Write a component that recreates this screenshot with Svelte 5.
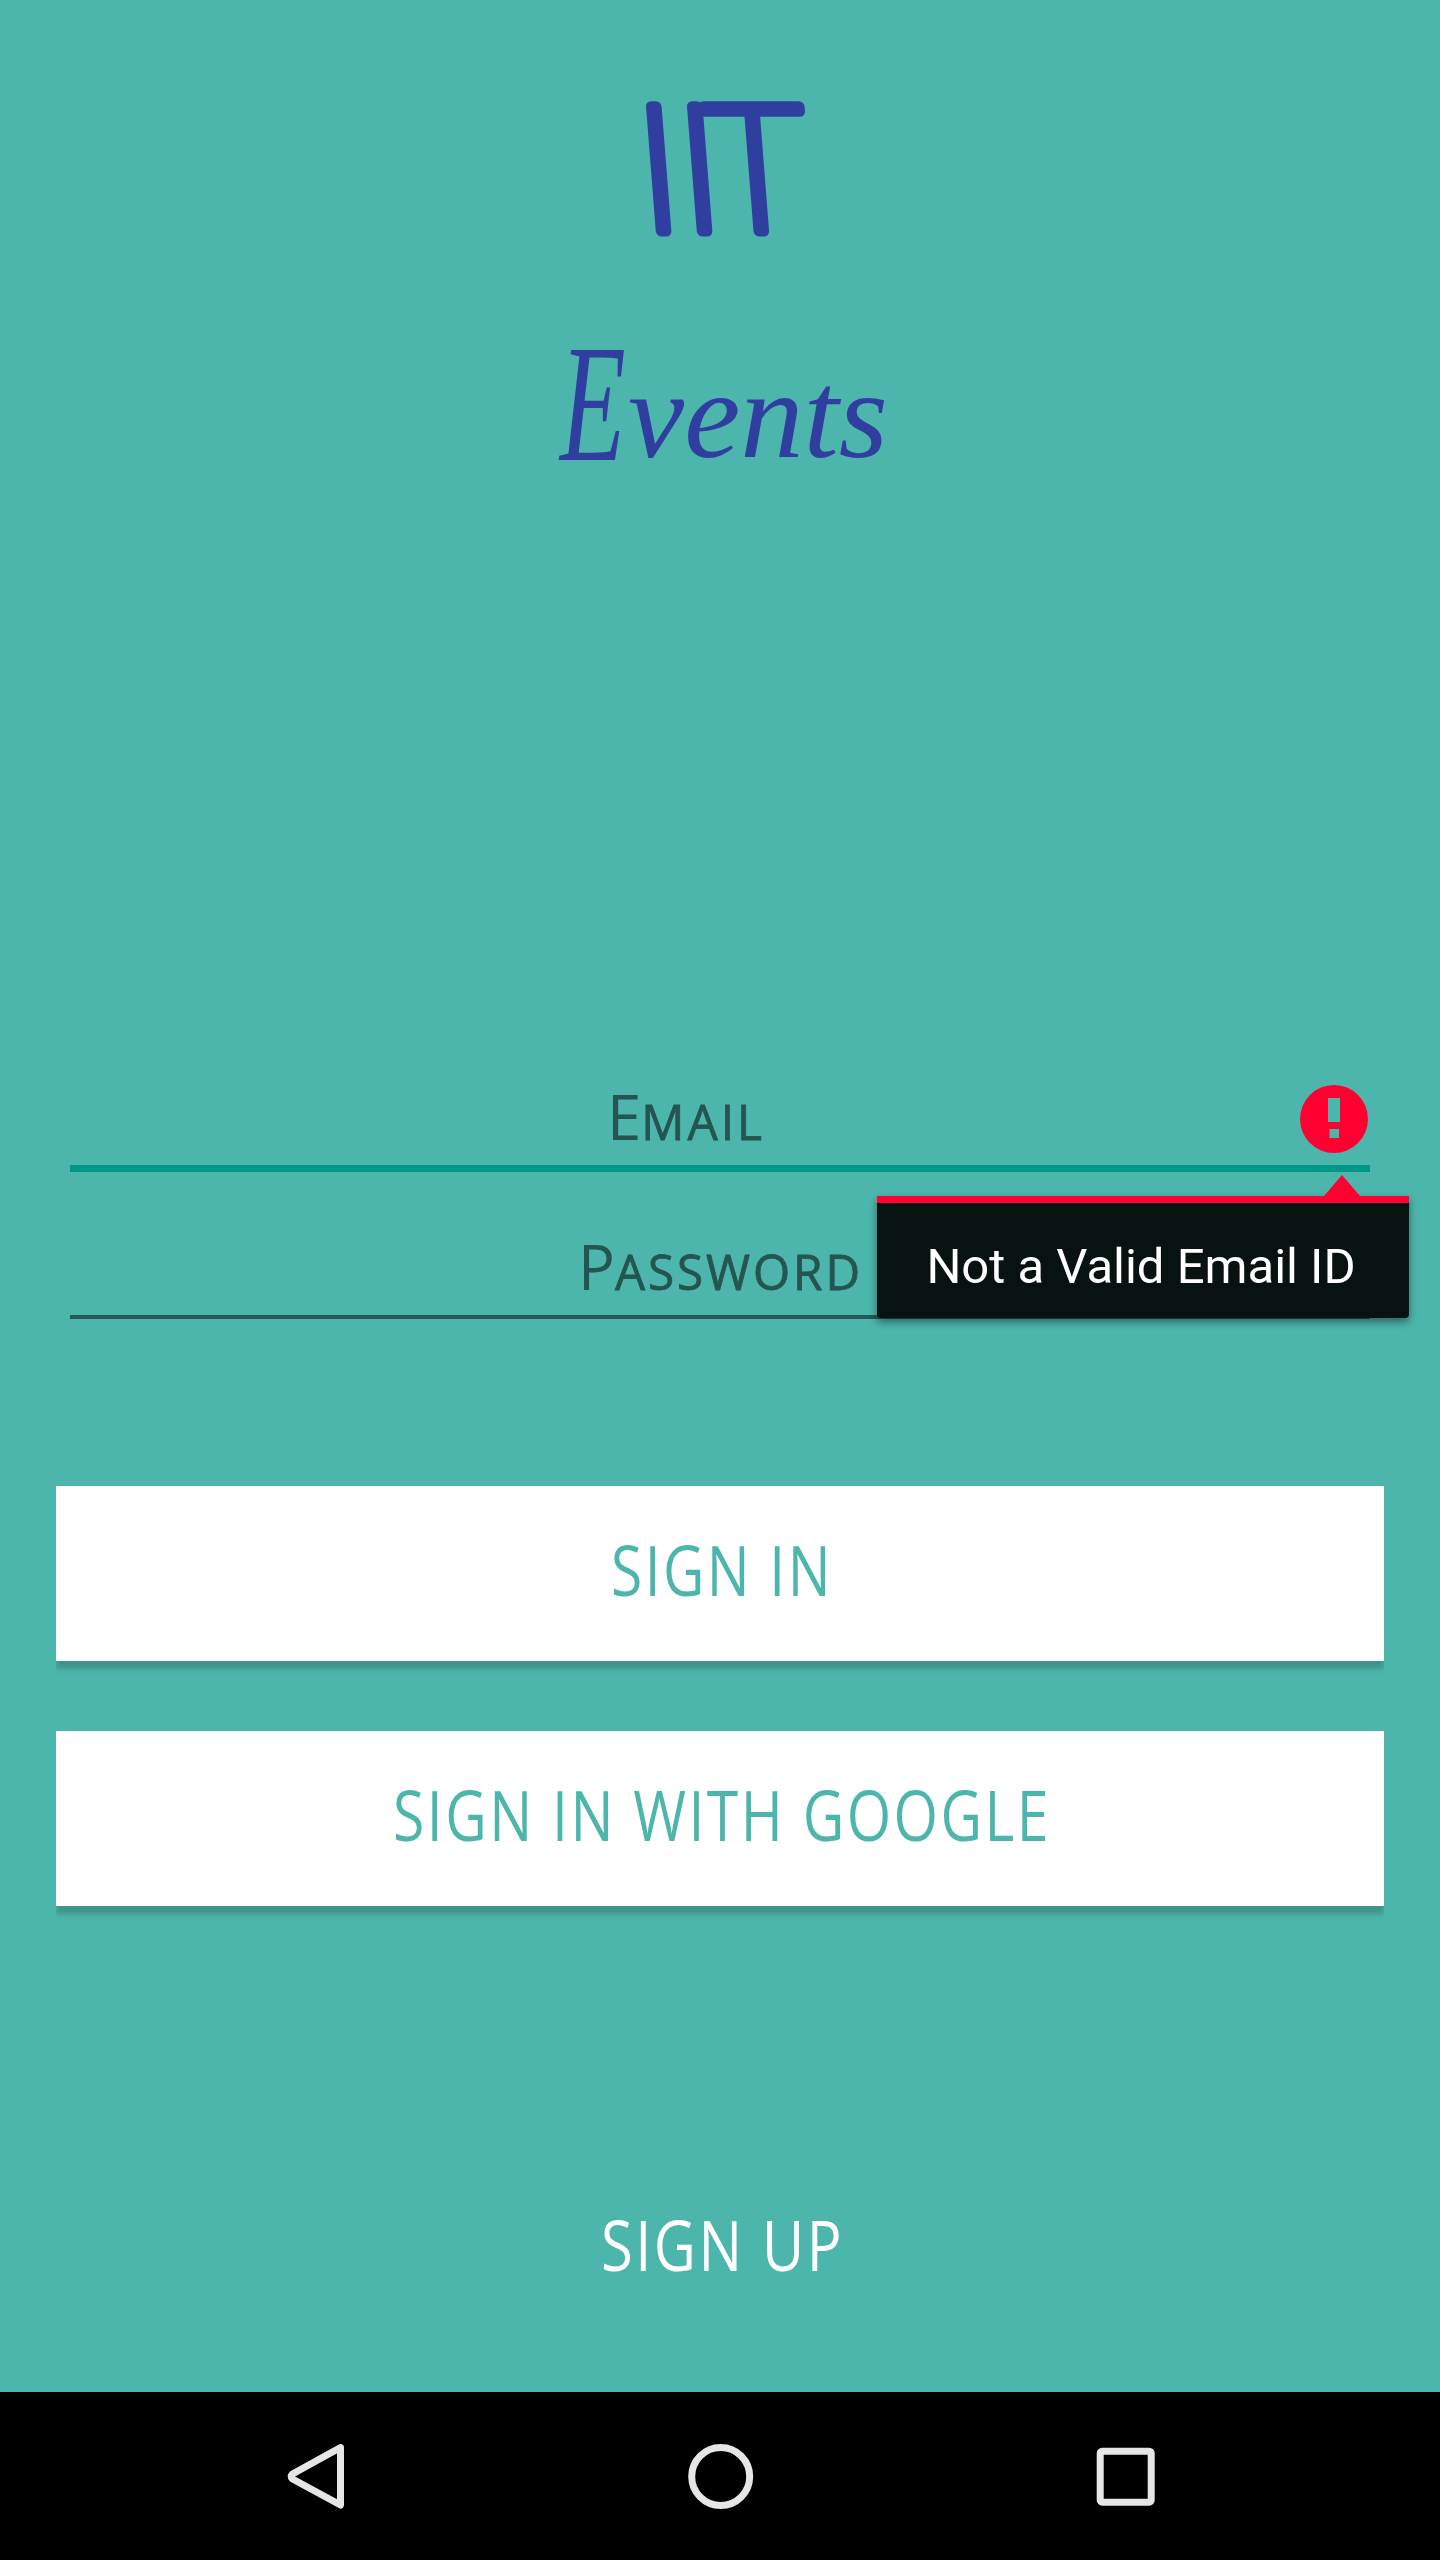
<script>
  const navIcons = ['back', 'home', 'recent'];
</script>

{#snippet label(text, width, size)}
  <svg class="label" {width} height="80" viewBox="0 0 {width} 80" role="img" aria-label={text}>
    <text x="2" y="65" font-size={size} textLength={width} lengthAdjust="spacingAndGlyphs">{text}</text>
  </svg>
{/snippet}

<div class="screen">
  <header>
    <svg class="brand" width="360" height="400" viewBox="0 0 360 400">
      <text class="iit" transform="translate(10 0) skewX(4.5)" y="151" x="79 120 147">IIT</text>
      <text class="events big" transform="translate(20 380) scale(0.64 1)">E</text>
      <text class="events" transform="translate(88 377) scale(1.02 1)">vents</text>
    </svg>
  </header>

  <form onsubmit={(e) => e.preventDefault()}>
    <div class="field email">
      <svg width="156" height="60" viewBox="0 0 156 60" class="hint">
        <text x="2" y="55" textLength="158" lengthAdjust="spacingAndGlyphs"><tspan class="cap">E</tspan><tspan class="small">MAIL</tspan></text>
      </svg>
      <svg class="error" width="70" height="70" viewBox="0 0 70 70">
        <path fill-rule="evenodd" d="M35 1a34 34 0 1 0 0 68a34 34 0 1 0 0-68ZM29 14H41V38H29ZM30.5 45H40V54H30.5Z" />
      </svg>
      <div class="tooltip">
        <svg class="arrow" width="36" height="21" viewBox="0 0 36 21"><path d="M18 0L36 21H0Z" /></svg>
        <span>Not a Valid Email ID</span>
      </div>
    </div>
    <div class="field password">
      <svg width="279" height="60" viewBox="0 0 279 60" class="hint">
        <text x="1" y="55" textLength="285" lengthAdjust="spacingAndGlyphs"><tspan class="cap">P</tspan><tspan class="small">ASSWORD</tspan></text>
      </svg>
    </div>

    <div class="actions">
      <div class="slot"><button>{@render label('SIGN IN', 222, 70)}</button></div>
      <div class="slot"><button>{@render label('SIGN IN WITH GOOGLE', 658, 70)}</button></div>
    </div>
    <a class="signup" href="#signup">{@render label('SIGN UP', 243, 70)}</a>
  </form>

  <nav>
    {#each navIcons as icon}
      <svg width="80" height="80" viewBox="0 0 80 80">
        {#if icon === 'back'}
          <path d="M65.5 11.5L17.5 38Q15 40.5 17.5 43L65.5 69Z" class="tri" />
        {:else if icon === 'home'}
          <circle cx="40.7" cy="40.5" r="29" />
        {:else}
          <rect x="15.2" y="15.2" width="51" height="51" rx="2" />
        {/if}
      </svg>
    {/each}
  </nav>
</div>

<style>
  :global(body) { margin: 0; }
  .screen {
    width: 1440px;
    height: 2560px;
    display: flex;
    flex-direction: column;
    background: #4db6ac;
    font-family: 'Open Sans', sans-serif;
    overflow: hidden;
  }
  svg { display: block; overflow: visible; }
  header {
    height: 1062px;
    box-sizing: border-box;
    padding-top: 80px;
    display: flex;
    justify-content: center;
    align-items: flex-start;
  }
  .brand { fill: #303f9f; }
  .iit {
    font: 100 175px Roboto, sans-serif;
    stroke: #303f9f;
    stroke-width: 11;
    stroke-linejoin: round;
  }
  .events { font: italic 124px 'Liberation Serif', serif; }
  .events.big { font-size: 168px; }
  form { flex: 1; display: flex; flex-direction: column; }
  .field {
    position: relative;
    box-sizing: border-box;
    margin: 0 70px;
    display: flex;
    align-items: flex-start;
  }
  .email {
    height: 110px;
    border-bottom: 7px solid #009688;
    padding: 23px 0 0 535px;
    z-index: 1;
  }
  .password {
    height: 147px;
    border-bottom: 4px solid #265a55;
    padding: 63px 0 0 507px;
  }
  .hint { fill: #245550; }
  .cap { font-size: 63px; }
  .small {
    font-size: 49px;
    letter-spacing: 3px;
    stroke: #245550;
    stroke-width: 0.8;
  }
  .error { margin: -1px 0 0 538px; fill: #ff0030; }
  .tooltip {
    position: absolute;
    left: 807px;
    top: 134px;
    width: 532px;
    height: 122px;
    box-sizing: border-box;
    border-top: 7px solid #ff0030;
    border-radius: 0 0 4px 4px;
    background: #081210;
    box-shadow: 0 4px 8px rgba(0, 0, 0, 0.45);
    color: #fff;
    font: 49px/1 Roboto, sans-serif;
    display: flex;
    justify-content: center;
    align-items: center;
    padding: 11px 4px 0 0;
    white-space: nowrap;
  }
  .arrow { position: absolute; left: 447px; top: -28px; fill: #ff0030; }
  .actions {
    padding: 165px 56px 0;
    display: flex;
    flex-direction: column;
    gap: 40px;
  }
  .slot { overflow: hidden; padding: 2px 0 28px; }
  button {
    display: flex;
    justify-content: center;
    align-items: center;
    box-sizing: border-box;
    width: 100%;
    height: 175px;
    padding: 0 0 5px;
    border: 0;
    background: #fff;
    box-shadow: 0 8px 5px rgba(62, 145, 136, 0.95);
  }
  .label { fill: #4db6ac; font-family: 'Open Sans', sans-serif; letter-spacing: 3px; }
  .signup { margin: 272px auto 0; }
  .signup .label { fill: #fff; }
  nav {
    height: 168px;
    background: #000;
    display: flex;
    justify-content: center;
    align-items: center;
    gap: 325px;
  }
  nav svg { fill: none; stroke: #e6e6e6; stroke-width: 7; }
  .tri { stroke-linejoin: round; }
</style>
